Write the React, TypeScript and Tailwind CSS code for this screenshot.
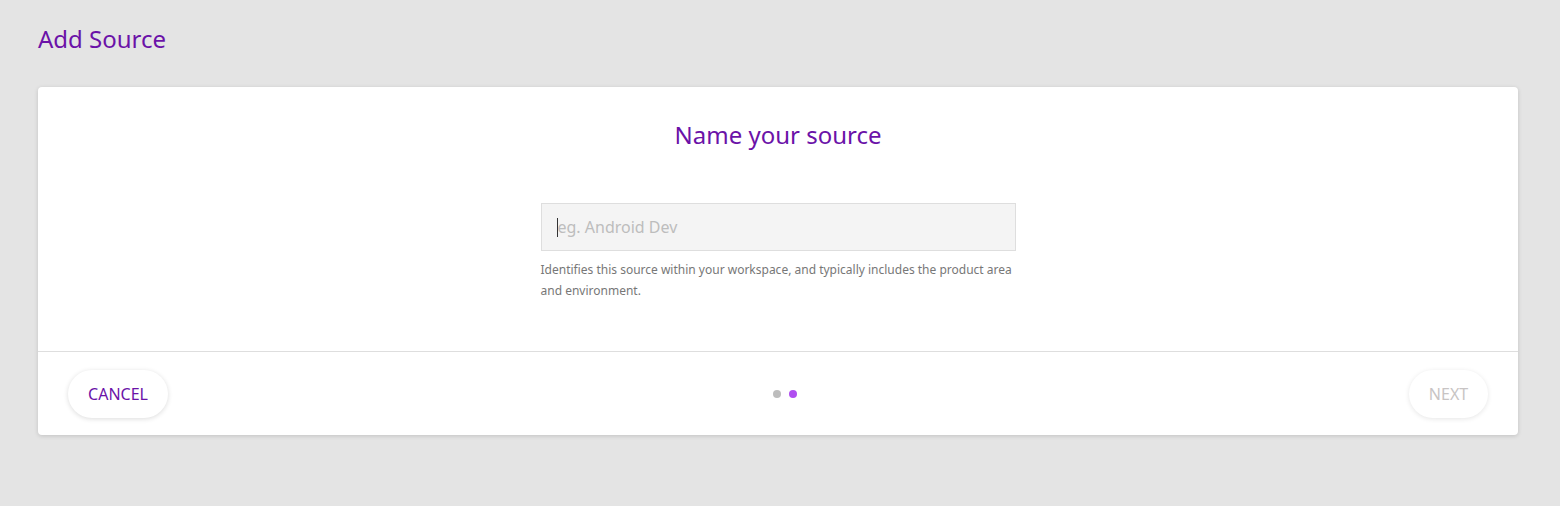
import React from "react";

export default function App() {
  return (
    <div className="min-h-[506px] w-full bg-[#e4e4e4] pl-[38px] pr-[42px] pt-[23px] pb-[70px]" style={{ fontFamily: '"Noto Sans", "Open Sans", sans-serif' }}>
      <h1 className="text-[24px] leading-[32px] text-[#6b12a8] font-normal">Add Source</h1>
      <div className="mt-[32px] bg-white rounded-[4px] shadow-[0_1px_4px_rgba(0,0,0,0.15)]">
        <div className="flex flex-col items-center pt-[116px] pb-[50px] relative">
          <h2 className="absolute top-[32px] text-[24px] leading-[32px] text-[#6b12a8] font-normal">Name your source</h2>
          <div className="w-[475px]">
            <div className="h-[48px] bg-[#f4f4f4] border border-[#dedede] flex items-center pl-[15px]">
              <span className="w-px h-[19px] bg-[#333]" />
              <span className="text-[16px] text-[#bdbdbd]">eg. Android Dev</span>
            </div>
            <p className="mt-[8px] text-[12px] leading-[21px] text-[#777]">
              Identifies this source within your workspace, and typically includes the product area and environment.
            </p>
          </div>
        </div>
        <div className="border-t border-[#dedede] h-[84px] flex items-center justify-between px-[30px]">
          <button className="h-[48px] w-[100px] rounded-full bg-white shadow-[0_1px_5px_rgba(0,0,0,0.14)] text-[16px] text-[#6b12a8]">CANCEL</button>
          <div className="flex items-center gap-[8px] mr-[8px]">
            <span className="w-[8px] h-[8px] rounded-full bg-[#bdbdbd]" />
            <span className="w-[8px] h-[8px] rounded-full bg-[#b04ef0]" />
          </div>
          <button className="h-[48px] w-[79px] rounded-full bg-white shadow-[0_1px_5px_rgba(0,0,0,0.1)] text-[16px] text-[#c8c4c4]">NEXT</button>
        </div>
      </div>
    </div>
  );
}
